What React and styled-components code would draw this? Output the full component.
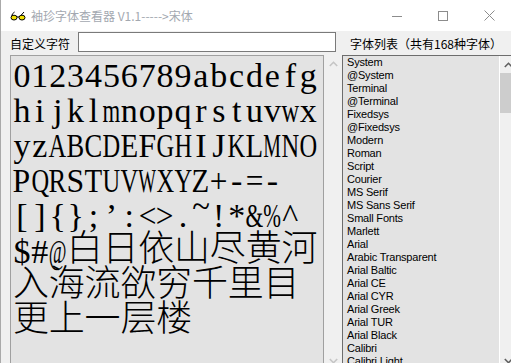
import React from "react";
import styled, { createGlobalStyle } from "styled-components";

const GlobalStyle = createGlobalStyle`
  html, body {
    margin: 0;
    padding: 0;
    background: #f0f0f0;
    overflow: hidden;
  }
  body {
    font-family: "Noto Sans CJK SC", sans-serif;
  }
`;

const Window = styled.div`
  width: 512px;
  height: 363px;
  overflow: hidden;
  box-sizing: border-box;
  border-left: 1px solid #aaaaaa;
  background: #f0f0f0;
  display: flex;
  flex-direction: column;
`;

const TitleBar = styled.div`
  height: 31px;
  flex: none;
  background: #ffffff;
  display: flex;
  align-items: center;
`;

const AppIcon = styled.svg`
  margin-left: 9px;
  margin-top: 1px;
  flex: none;
`;

const Title = styled.div`
  margin-left: 5px;
  font-family: "Noto Sans CJK SC", sans-serif;
  font-size: 12px;
  color: #a3a8b0;
  white-space: nowrap;
`;

const Controls = styled.div`
  margin-left: auto;
  display: flex;
  height: 100%;
`;

const ControlButton = styled.div`
  width: 46px;
  height: 31px;
  display: flex;
  align-items: center;
  justify-content: center;
`;

const TopRow = styled.div`
  height: 24px;
  flex: none;
  display: flex;
  align-items: flex-start;
  padding-left: 9px;
`;

const FieldLabel = styled.div`
  margin-top: 6px;
  font-family: "Noto Sans CJK SC", sans-serif;
  font-size: 12px;
  line-height: 13px;
  color: #000;
  white-space: nowrap;
`;

const CharInput = styled.div`
  width: 258px;
  height: 20px;
  box-sizing: border-box;
  margin-top: 1px;
  margin-left: 8px;
  border: 1px solid #7a7a7a;
  background: #ffffff;
`;

const ListLabel = styled(FieldLabel)`
  margin-left: 14px;
`;

const Main = styled.div`
  height: 314px;
  flex: none;
  display: flex;
  padding-left: 9px;
`;

const TextPane = styled.div`
  width: 314px;
  flex: none;
  box-sizing: border-box;
  border: 1px solid #a0a0a0;
  background: #e3e3e3;
  padding: 2px 0 0 2px;
  overflow: hidden;
`;

const Line = styled.div`
  height: 35px;
  line-height: 35px;
  white-space: nowrap;
  font-family: "Liberation Serif", serif;
  font-size: 34px;
  color: #000;
`;

/* one half-width cell of the 宋体 grid */
const Cell = styled.span`
  display: inline-flex;
  justify-content: center;
  width: 17.9px;
`;

const Glyph = styled.span`
  display: inline-block;
  transform: translateY(${(p) => p.$lift || 0}px) scaleX(${(p) => p.$s});
  transform-origin: 50% 50%;
`;

const Han = styled.span`
  font-family: "Noto Sans CJK SC", sans-serif;
  font-size: 36px;
  font-weight: 300;
  line-height: 24px;
  letter-spacing: -0.2px;
  vertical-align: 2px;
`;

const VScroll = styled.div`
  width: 18px;
  flex: none;
  background: #f0f0f0;
  display: flex;
  flex-direction: column;
  justify-content: space-between;
`;

const ArrowButton = styled.div`
  height: 17px;
  display: flex;
  align-items: center;
  justify-content: center;
`;

const ListBox = styled.div`
  width: 175px;
  flex: none;
  box-sizing: border-box;
  border-top: 1px solid #6d6d6d;
  border-left: 1px solid #6d6d6d;
  background: #e3e3e3;
  display: flex;
`;

const Items = styled.div`
  flex: 1;
  overflow: hidden;
  border-right: 1px solid #ffffff;
`;

const Item = styled.div`
  height: 13px;
  line-height: 13px;
  padding-left: 4px;
  font-family: "Liberation Sans", Arial, sans-serif;
  font-size: 11px;
  letter-spacing: -0.2px;
  color: #000;
  white-space: nowrap;
`;

const ListScroll = styled.div`
  width: 17px;
  flex: none;
  background: #f0f0f0;
  display: flex;
  flex-direction: column;
`;

const Thumb = styled.div`
  height: 40px;
  background: #cdcdcd;
`;

const Track = styled.div`
  flex: 1;
`;

const Chevron = ({ up, color }) => (
  <svg width="9" height="6" viewBox="0 0 9 6">
    <polyline
      points={up ? "0.8,5 4.5,1.3 8.2,5" : "0.8,1 4.5,4.7 8.2,1"}
      fill="none"
      stroke={color}
      strokeWidth="1.6"
    />
  </svg>
);

// Times advance widths (1/1000 em), used to squeeze wide letters into a half-width cell
const widths = {
  a: 444, b: 500, c: 444, d: 500, e: 444, f: 333, g: 500, h: 500, i: 278, j: 278,
  k: 500, l: 278, m: 778, n: 500, o: 500, p: 500, q: 500, r: 333, s: 389, t: 278,
  u: 500, v: 500, w: 722, x: 500, y: 500, z: 444,
  A: 722, B: 667, C: 667, D: 722, E: 611, F: 556, G: 722, H: 722, I: 333, J: 389,
  K: 722, L: 611, M: 889, N: 722, O: 722, P: 556, Q: 722, R: 667, S: 556, T: 611,
  U: 722, V: 722, W: 944, X: 722, Y: 722, Z: 611,
  "+": 564, "=": 564, "<": 564, ">": 564, "~": 541, "&": 778, "%": 833, "@": 921,
};

const scaleFor = (ch) => {
  const w = widths[ch] || 500;
  return w > 520 ? +(520 / w).toFixed(3) : 1;
};

// 宋体 draws the tilde up at cap height
const liftFor = (ch) => (ch === "~" ? -10 : 0);

const lines = [
  [["l", "0123456789abcdefg"]],
  [["l", "hijklmnopqrstuvwx"]],
  [["l", "yzABCDEFGHIJKLMNO"]],
  [["l", "PQRSTUVWXYZ+-=-"]],
  [["l", "[]{};’:<>.~!*&%^"]],
  [["l", "$#@"], ["h", "白日依山尽黄河"]],
  [["h", "入海流欲穷千里目"]],
  [["h", "更上一层楼"]],
];

const fonts = [
  "System", "@System", "Terminal", "@Terminal", "Fixedsys", "@Fixedsys",
  "Modern", "Roman", "Script", "Courier", "MS Serif", "MS Sans Serif",
  "Small Fonts", "Marlett", "Arial", "Arabic Transparent", "Arial Baltic",
  "Arial CE", "Arial CYR", "Arial Greek", "Arial TUR", "Arial Black",
  "Calibri", "Calibri Light", "Calibri Light",
];

export default function App() {
  return (
    <>
      <GlobalStyle />
      <Window>
        <TitleBar>
          <AppIcon width="16" height="10" viewBox="0 0 16 10">
            <path d="M1.6 6 Q1.8 2.2 4.6 1" fill="none" stroke="#000" strokeWidth="1" />
            <path d="M10.8 4.5 L14 1" fill="none" stroke="#000" strokeWidth="1" />
            <ellipse cx="4" cy="6.6" rx="3" ry="2.4" fill="#f2e200" stroke="#000" strokeWidth="1" />
            <ellipse cx="12" cy="6.6" rx="3" ry="2.4" fill="#f2e200" stroke="#000" strokeWidth="1" />
            <path d="M7 6.2 Q8 5.2 9 6.2" fill="none" stroke="#000" strokeWidth="1" />
          </AppIcon>
          <Title>袖珍字体查看器 V1.1-----&gt;宋体</Title>
          <Controls>
            <ControlButton>
              <svg width="10" height="10" viewBox="0 0 10 10">
                <line x1="0" y1="5.5" x2="10" y2="5.5" stroke="#8c8c8c" strokeWidth="1" />
              </svg>
            </ControlButton>
            <ControlButton>
              <svg width="10" height="10" viewBox="0 0 10 10">
                <rect x="0.5" y="0.5" width="9" height="9" fill="none" stroke="#8c8c8c" strokeWidth="1" />
              </svg>
            </ControlButton>
            <ControlButton>
              <svg width="11" height="11" viewBox="0 0 11 11">
                <path d="M0.5 0.5 L10.5 10.5 M10.5 0.5 L0.5 10.5" stroke="#8c8c8c" strokeWidth="1" />
              </svg>
            </ControlButton>
          </Controls>
        </TitleBar>

        <TopRow>
          <FieldLabel>自定义字符</FieldLabel>
          <CharInput />
          <ListLabel>字体列表（共有168种字体）</ListLabel>
        </TopRow>

        <Main>
          <TextPane>
            {lines.map((segs, i) => (
              <Line key={i}>
                {segs.map(([kind, text], j) =>
                  kind === "l" ? (
                    Array.from(text).map((ch, k) => (
                      <Cell key={j + "-" + k}>
                        <Glyph $s={scaleFor(ch)} $lift={liftFor(ch)}>{ch}</Glyph>
                      </Cell>
                    ))
                  ) : (
                    <Han key={j}>{text}</Han>
                  )
                )}
              </Line>
            ))}
          </TextPane>
          <VScroll>
            <ArrowButton><Chevron up color="#c5c5c5" /></ArrowButton>
            <ArrowButton><Chevron color="#c5c5c5" /></ArrowButton>
          </VScroll>
          <ListBox>
            <Items>
              {fonts.map((f, i) => (
                <Item key={i}>{f}</Item>
              ))}
            </Items>
            <ListScroll>
              <ArrowButton><Chevron up color="#606060" /></ArrowButton>
              <Thumb />
              <Track />
              <ArrowButton><Chevron color="#606060" /></ArrowButton>
            </ListScroll>
          </ListBox>
        </Main>
      </Window>
    </>
  );
}
